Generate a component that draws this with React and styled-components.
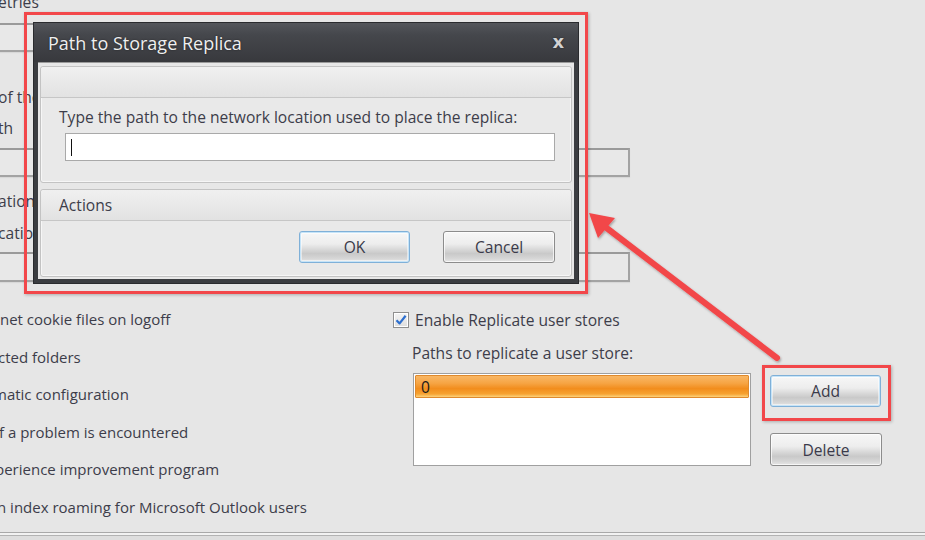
import React from "react";
import styled, { createGlobalStyle, css } from "styled-components";

const Global = createGlobalStyle`
  html, body { margin: 0; padding: 0; background: #e6e6e6; }
  body { font-family: "Open Sans", "Noto Sans", sans-serif; }
  * { box-sizing: border-box; }
`;

const Page = styled.div`
  position: relative;
  width: 925px;
  height: 540px;
  overflow: hidden;
  background: #e6e6e6;
  color: #3d3d4a;
  font-size: 15.6px;
  display: flex;
  flex-direction: column;
`;

const Line = styled.div`
  height: 20px;
  line-height: 20px;
  white-space: nowrap;
  margin-left: -2px;
  margin-top: ${(p) => p.$mt || 0}px;
`;

const Field = styled.div`
  height: ${(p) => p.$h || 29}px;
  width: ${(p) => p.$w}px;
  margin-left: -4px;
  margin-top: ${(p) => p.$mt || 0}px;
  border: 2px solid #a3a3a3;
  border-top-color: #9a9a9a;
  background: #e8e8e8;
  box-shadow: 0 1px 1px rgba(0, 0, 0, 0.06);
`;

const Lower = styled.div`
  display: grid;
  grid-template-columns: 393px 1fr;
  margin-top: 19px;
`;

const OptionList = styled.div`
  display: flex;
  flex-direction: column;
  font-size: 15px;
`;

const Option = styled.div`
  height: 37.5px;
  line-height: 37.5px;
  white-space: nowrap;
  margin-left: ${(p) => p.$off || 0}px;
`;

const RightCol = styled.div`
  display: flex;
  flex-direction: column;
  padding-top: 9px;
`;

const CheckRow = styled.label`
  display: flex;
  align-items: center;
  gap: 6px;
  height: 20px;
`;

const Check = styled.span`
  width: 16px;
  height: 16px;
  border: 1px solid #8f8f8f;
  background: linear-gradient(#f4f4f4, #dedede);
  display: flex;
  align-items: center;
  justify-content: center;
  box-shadow: inset 0 0 0 1px #ffffff;
`;

const SubLabel = styled.div`
  margin-left: 19px;
  margin-top: 13px;
  height: 20px;
  line-height: 20px;
`;

const ListArea = styled.div`
  display: flex;
  margin-left: 20px;
  margin-top: 10px;
  gap: 19px;
`;

const ListBox = styled.div`
  width: 338px;
  height: 93px;
  border: 1px solid #a0a0a0;
  background: #ffffff;
  padding: 1px;
`;

const ListItem = styled.div`
  height: 23px;
  line-height: 22px;
  padding-left: 5px;
  color: #1a1a1a;
  border: 1px solid #e08a2c;
  border-radius: 1px;
  background: ${(p) =>
    p.$selected
      ? "linear-gradient(#f9b765 0%, #f6a443 35%, #f28d1d 60%, #f6a230 85%, #fcd27c 100%)"
      : "transparent"};
`;

const ButtonCol = styled.div`
  display: flex;
  flex-direction: column;
  gap: 26px;
  padding-top: 2px;
`;

const Button = styled.button`
  width: ${(p) => p.$w || 111}px;
  height: ${(p) => p.$h || 32}px;
  font-family: inherit;
  font-size: 15.6px;
  color: #3a3a4a;
  border: 1px solid #8c8c8c;
  border-radius: 3px;
  background: linear-gradient(
    #f7f7f7 0%,
    #ededed 40%,
    #dcdcdc 55%,
    #c9c9c9 72%,
    #d6d6d6 88%,
    #e6e6e6 100%
  );
  box-shadow: inset 0 0 0 1px rgba(255, 255, 255, 0.7);
  padding: 0;
  cursor: default;
  ${(p) =>
    p.$focus &&
    css`
      border-color: #7fb0d8;
      box-shadow: inset 0 0 0 1px #c6e4f8, inset 0 0 0 2px rgba(255, 255, 255, 0.5);
    `}
`;

const Footer = styled.div`
  margin-top: auto;
  height: 8px;
  border-top: 1px solid #a9a9a9;
  background: linear-gradient(#f2f2f2 0, #f2f2f2 2px, #b3b3b3 2px, #b3b3b3 3px, #dedede 3px);
`;

/* ---- annotation + dialog overlay ---- */

const Highlight = styled.div`
  position: absolute;
  left: ${(p) => p.$x}px;
  top: ${(p) => p.$y}px;
  border: 3px solid #f2474a;
  box-shadow: 1px 1px 3px rgba(0, 0, 0, 0.25);
  padding: ${(p) => p.$pad};
`;

const Dialog = styled.div`
  width: 546px;
  height: 262px;
  background: #3b3d41;
  border: 1px solid #2a2b2e;
  display: flex;
  flex-direction: column;
  padding: 0 4px 4px 4px;
`;

const TitleBar = styled.div`
  height: 40px;
  margin: 0 -4px;
  padding: 0 14px 0 14px;
  display: flex;
  align-items: center;
  justify-content: space-between;
  background: linear-gradient(#54565b 0%, #45474c 30%, #38393d 100%);
  color: #efefef;
  font-size: 18px;
  text-shadow: 0 0 2px rgba(0, 0, 0, 0.5);
`;

const Close = styled.span`
  font-family: "DejaVu Sans", sans-serif;
  font-weight: 700;
  font-size: 18px;
  color: #d2d2d2;
  line-height: 1;
  margin-top: -2px;
`;

const Body = styled.div`
  flex: 1;
  background: #e7e7e7;
  border-top: 1px solid #9a9a9a;
  padding: 3px 2px 2px 2px;
  display: flex;
  flex-direction: column;
  gap: 6px;
`;

const Group = styled.div`
  border: 1px solid #c3c3c3;
  border-radius: 3px;
  box-shadow: inset 0 0 0 1px #f6f6f6;
  background: #e9e9e9;
  display: flex;
  flex-direction: column;
  height: ${(p) => p.$h}px;
`;

const GroupHeader = styled.div`
  height: 31px;
  line-height: 30px;
  padding-left: 18px;
  border-bottom: 1px solid #c6c6c6;
  background: linear-gradient(#f0f0f0, #e2e2e2);
  border-radius: 3px 3px 0 0;
  color: #3d3d4a;
`;

const GroupContent = styled.div`
  display: flex;
  flex-direction: column;
  padding: ${(p) => p.$pad};
`;

const Prompt = styled.div`
  height: 20px;
  line-height: 20px;
  white-space: nowrap;
`;

const TextInput = styled.div`
  margin-top: 6px;
  margin-left: 6px;
  width: 490px;
  height: 28px;
  background: #ffffff;
  border: 1px solid #a9a9a9;
  padding: 5px 0 0 5px;
`;

const Caret = styled.span`
  display: block;
  width: 1px;
  height: 17px;
  background: #111;
`;

const Actions = styled.div`
  display: flex;
  justify-content: flex-end;
  gap: 33px;
  padding: 10px 16px 0 0;
`;

const ArrowLayer = styled.svg`
  position: absolute;
  left: 0;
  top: 0;
  pointer-events: none;
`;

export default function App() {
  return (
    <>
      <Global />
      <Page>
        <Line $mt={-8}>etries</Line>
        <Field $w={440} $mt={11} />
        <Line $mt={35}>of the</Line>
        <Line $mt={11}>th</Line>
        <Field $w={634} $mt={10} />
        <Line $mt={14}>ation</Line>
        <Line $mt={12}>cation</Line>
        <Field $w={634} $h={30} $mt={9} />

        <Lower>
          <OptionList>
            <Option $off={0}>net cookie files on logoff</Option>
            <Option $off={-2}>cted folders</Option>
            <Option $off={-7}>matic configuration</Option>
            <Option $off={-1}>f a problem is encountered</Option>
            <Option $off={-5}>perience improvement program</Option>
            <Option $off={-3}>n index roaming for Microsoft Outlook users</Option>
          </OptionList>
          <RightCol>
            <CheckRow>
              <Check>
                <svg width="12" height="12" viewBox="0 0 12 12">
                  <path d="M1.5 6.2 L4.6 9.4 L10.6 1.8" fill="none" stroke="#2d6fcf" strokeWidth="2.2" strokeLinejoin="round" />
                </svg>
              </Check>
              Enable Replicate user stores
            </CheckRow>
            <SubLabel>Paths to replicate a user store:</SubLabel>
            <ListArea>
              <ListBox>
                <ListItem $selected>0</ListItem>
              </ListBox>
              <ButtonCol>
                <Button $focus>Add</Button>
                <Button $w={112} $h={33}>Delete</Button>
              </ButtonCol>
            </ListArea>
          </RightCol>
        </Lower>
        <Footer />

        <Highlight $x={24} $y={12} $pad="7px 6px 7px 6px">
          <Dialog>
            <TitleBar>
              <span>Path to Storage Replica</span>
              <Close>x</Close>
            </TitleBar>
            <Body>
              <Group $h={117}>
                <GroupHeader />
                <GroupContent $pad="9px 0 0 18px">
                  <Prompt>Type the path to the network location used to place the replica:</Prompt>
                  <TextInput>
                    <Caret />
                  </TextInput>
                </GroupContent>
              </Group>
              <Group $h={88}>
                <GroupHeader>Actions</GroupHeader>
                <Actions>
                  <Button $focus>OK</Button>
                  <Button $w={112}>Cancel</Button>
                </Actions>
              </Group>
            </Body>
          </Dialog>
        </Highlight>

        <Highlight $x={762} $y={365} $pad="0">
          <div style={{ width: 123, height: 50 }} />
        </Highlight>

        <ArrowLayer width="925" height="540" viewBox="0 0 925 540">
          <defs>
            <filter id="sh" x="-10%" y="-10%" width="120%" height="120%">
              <feDropShadow dx="1" dy="1.5" stdDeviation="1.2" floodColor="#000" floodOpacity="0.3" />
            </filter>
          </defs>
          <g filter="url(#sh)">
            <line x1="777" y1="358" x2="604" y2="226" stroke="#f2474a" strokeWidth="6" strokeLinecap="round" />
            <polygon points="589,213 615,218 598,238" fill="#f2474a" />
          </g>
        </ArrowLayer>
      </Page>
    </>
  );
}
